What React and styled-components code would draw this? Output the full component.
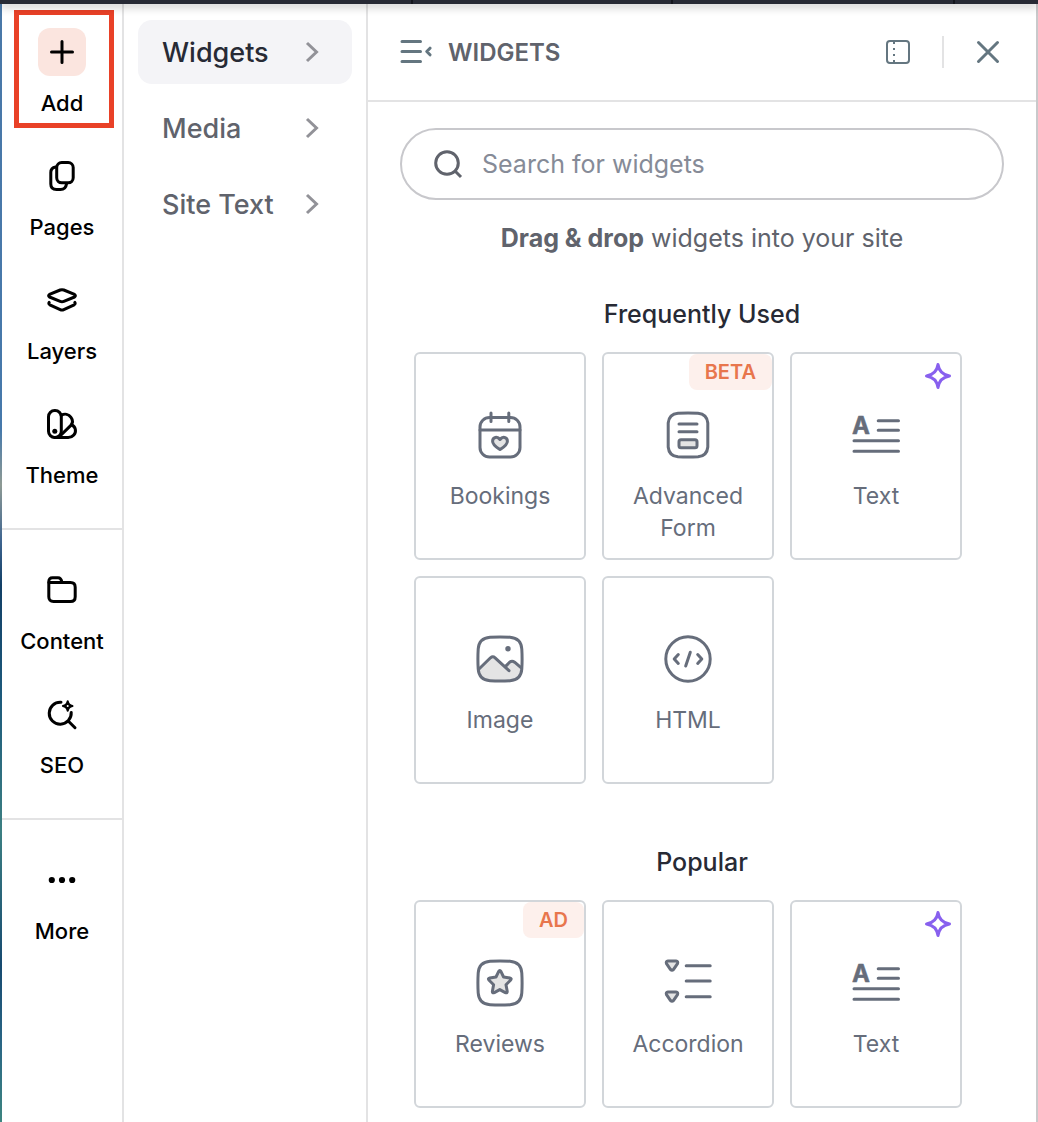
import React, { useState } from 'react';
import styled, { createGlobalStyle } from 'styled-components';

const GlobalStyle = createGlobalStyle`
  * {
    box-sizing: border-box;
  }

  body {
    margin: 0;
    background: #fff;
    font-family: Inter, "Liberation Sans", sans-serif;
  }

  button,
  input {
    font-family: inherit;
  }
`;

const Page = styled.div`
  display: flex;
  flex-direction: column;
  min-height: 100vh;
`;

const TopBar = styled.header`
  display: flex;
  height: 4px;
  padding-left: 411px;
  background: #272a35;
  box-shadow: 0 2px 10px rgba(0, 0, 0, 0.35);
  z-index: 1;
`;

const TopBarSlot = styled.div`
  width: ${({ $width }) => $width}px;
  border-left: 2px solid #14161d;
`;

const Body = styled.div`
  display: flex;
  flex: 1;
`;

const CanvasEdge = styled.div`
  width: 2px;
  background: linear-gradient(#4a78a8, #4679ab 38%, #8e9a94 43%, #3f6590 48%, #123f66 52%, #1d5a7c 62%, #3c7f82 74%, #174a70 86%, #2a6685 93%, #3d8580);
`;

const Rail = styled.nav`
  width: 122px;
  border-right: 2px solid #e3e3e4;
`;

const RailButton = styled.button`
  position: relative;
  display: flex;
  flex-direction: column;
  align-items: center;
  gap: 11px;
  width: 100%;
  padding: 24px 0 9px;
  border: 0;
  background: none;
  color: #000;
  font-size: 22px;
  font-weight: 500;
  line-height: 32px;
  cursor: pointer;
`;

const RailIcon = styled.span`
  display: flex;
  align-items: center;
  justify-content: center;
  width: 48px;
  height: 48px;
  border-radius: 12px;
  background: ${({ $active }) => ($active ? '#fbe5df' : 'none')};
`;

const Highlight = styled.span`
  position: absolute;
  inset: 6px 8px 0 12px;
  border: 5px solid #e94127;
`;

const RailDivider = styled.hr`
  height: 2px;
  margin: 28px 0 12px;
  border: 0;
  background: #e3e3e4;
`;

const SubNav = styled.nav`
  display: flex;
  flex-direction: column;
  gap: 12px;
  width: 244px;
  padding: 16px 14px;
  border-right: 2px solid #e3e3e4;
`;

const SubNavButton = styled.button`
  display: flex;
  align-items: center;
  justify-content: space-between;
  height: 64px;
  padding: 0 28px 0 24px;
  border: 0;
  border-radius: 14px;
  background: ${({ $active }) => ($active ? '#f4f4f7' : 'none')};
  color: ${({ $active }) => ($active ? '#272a35' : '#60636c')};
  font-size: 27px;
  font-weight: 500;
  cursor: pointer;
`;

const Panel = styled.main`
  flex: 1;
  border-right: 2px solid #c9c9cb;
`;

const PanelHeader = styled.div`
  display: flex;
  align-items: center;
  gap: 16px;
  height: 98px;
  padding: 0 32px;
  border-bottom: 2px solid #e3e3e4;
`;

const PanelTitle = styled.h1`
  flex: 1;
  margin: 0;
  color: #60636c;
  font-size: 24px;
  font-weight: 600;
`;

const IconButton = styled.button`
  display: flex;
  padding: 0;
  border: 0;
  background: none;
  cursor: pointer;
`;

const HeaderDivider = styled.span`
  width: 2px;
  height: 32px;
  margin: 0 12px 0 16px;
  background: #e3e3e4;
`;

const PanelContent = styled.div`
  padding: 26px 32px 0;
`;

const SearchBox = styled.label`
  display: flex;
  align-items: center;
  gap: 18px;
  height: 72px;
  padding: 0 30px;
  border: 2px solid #c8c8cc;
  border-radius: 36px;
`;

const SearchInput = styled.input`
  flex: 1;
  min-width: 0;
  padding: 0;
  border: 0;
  outline: 0;
  background: none;
  color: #272a35;
  font-size: 25px;

  &::placeholder {
    color: #868b97;
    opacity: 1;
  }
`;

const Tip = styled.p`
  margin: 22px 0 0;
  color: #60636c;
  font-size: 25px;
  line-height: 32px;
  text-align: center;
`;

const Section = styled.section`
  margin-bottom: 62px;
`;

const SectionTitle = styled.h2`
  margin: 0 0 22px;
  color: #272a35;
  font-size: 25px;
  font-weight: 500;
  line-height: 32px;
  text-align: center;
`;

const Sections = styled.div`
  padding-top: 44px;

  ${Section}:last-child {
    margin-bottom: 0;
  }
`;

const Grid = styled.div`
  display: grid;
  grid-template-columns: repeat(auto-fill, 172px);
  gap: 16px;
  padding-left: 14px;
`;

const Card = styled.button`
  position: relative;
  display: flex;
  flex-direction: column;
  align-items: center;
  gap: 21px;
  height: 208px;
  padding: 57px 16px 0;
  border: 2px solid #d2d6da;
  border-radius: 6px;
  background: #fff;
  color: #666d7b;
  font-size: 23px;
  line-height: 32px;
  cursor: grab;
`;

const Badge = styled.span`
  position: absolute;
  top: 0;
  right: 0;
  padding: 0 16px;
  border-radius: 8px;
  background: #fdf0ec;
  color: #e8764d;
  font-size: 20px;
  font-weight: 600;
  line-height: 36px;
`;

const Sparkle = styled.svg`
  position: absolute;
  top: 9px;
  right: 9px;
  fill: none;
  stroke: #8860ee;
  stroke-width: 3;
  stroke-linejoin: round;
`;

const RailSvg = styled.svg`
  fill: none;
  stroke: #000;
  stroke-width: 3;
  stroke-linecap: round;
  stroke-linejoin: round;
`;

const HeaderSvg = styled.svg`
  fill: none;
  stroke: #647680;
  stroke-width: 3;
  stroke-linecap: round;
  stroke-linejoin: round;
`;

const WidgetSvg = styled.svg`
  flex-shrink: 0;
  fill: none;
  stroke: #666d7b;
  stroke-width: 3;
  stroke-linecap: round;
  stroke-linejoin: round;
`;

const SHADE = '#e4e4e4';

const railIcons = {
  add: <path d="M16 5.5v21M5.5 16h21" />,
  pages: (
    <>
      <rect x="10.7" y="2.5" width="16.5" height="20.3" rx="5" />
      <path d="M9.6 7C6.5 7.5 4.8 9.4 4.8 12.5V24c0 3.5 2.2 5.5 5.7 5.5h4c3.5 0 5.5-2 6-5.5" />
    </>
  ),
  layers: (
    <>
      <path d="M14.2 6Q16 5.3 17.8 6l10.7 4.4q1.8 1.3 0 2.6l-10.7 4.4q-1.8.7-3.6 0L3.5 13q-1.8-1.3 0-2.6Z" />
      <path d="M3.2 18.4q-1 1.5.6 2.4l10.4 4.8q1.8.8 3.6 0l10.4-4.8q1.6-.9.6-2.4" />
    </>
  ),
  theme: (
    <>
      <rect x="2.5" y="2.5" width="12.8" height="27" rx="6.2" />
      <path d="M15.2 7.4c3.5-2 7.6-1.2 9.8 2 2.2 3 2 5.6-.4 8.2L13 29" />
      <path d="M25.6 17c4 1.5 5.2 6.500 2.200 10-1.600 1.800-3.200 2.500-5.600 2.500H8.800" />
      <circle cx="8.8" cy="23.2" r="2.5" fill="#000" stroke="none" />
    </>
  ),
  content: (
    <>
      <path d="M2.8 8V7.5c0-2.5 1.2-3.7 3.7-3.7H12c2.6 0 3.4 1.6 4 4.7h8.5c3.1 0 4.7 1.7 4.7 4.7v9.5c0 3.2-1.6 4.8-4.7 4.8h-17c-3.1 0-4.7-1.6-4.7-4.8Z" />
      <path d="M3 8.5h13" />
    </>
  ),
  seo: (
    <>
      <path d="M15 4.2a11 11 0 1 0 10.200 10.200M22.500 23.200l6.500 6.500" />
      <path fill="#000" strokeWidth="2" d="M21.7 3.2q.8 4 4.800 4.800-4 .8-4.800 4.800-.8-4-4.800-4.800 4-.8 4.800-4.800Z" />
      <circle cx="21.7" cy="8" r="1" fill="#fff" stroke="none" />
    </>
  ),
  more: (
    <>
      <circle cx="5.8" cy="16" r="3.1" fill="#000" stroke="none" />
      <circle cx="16" cy="16" r="3.1" fill="#000" stroke="none" />
      <circle cx="26.2" cy="16" r="3.1" fill="#000" stroke="none" />
    </>
  ),
};

const squircle = 'M14 2.200Q24 1.600 34 2.200Q45 3 45.800 14Q46.400 24 45.800 34Q45 45 34 45.800Q24 46.400 14 45.800Q3 45 2.200 34Q1.600 24 2.200 14Q3 3 14 2.200Z';

const textIcon = (
  <>
    <text x="0" y="23" fontSize="24" fontWeight="700" fill="#666d7b" strokeWidth="0.5">A</text>
    <path d="M26.2 9.7h20.3M26.2 19.3h20.3M2 29.7h44.5M2 40.3h44.5" />
  </>
);

const widgetIcons = {
  bookings: (
    <>
      <rect x="4" y="6.5" width="40" height="39.5" rx="9.5" />
      <path d="M4 19h40M15 2v8.5M32.8 2v8.5" />
      <path fill={SHADE} d="M24 38.5c-3-2-7.400-4.500-7.400-8.300 0-4.200 4.800-5.200 7.400-1.700 2.600-3.500 7.400-2.500 7.400 1.700 0 3.800-4.400 6.300-7.400 8.300Z" />
    </>
  ),
  form: (
    <>
      <path d="M14 2.200Q24 1.600 34 2.200Q43 3 43.800 12V36Q43 45 34 45.800Q24 46.400 14 45.800Q5 45 4.200 36V12Q5 3 14 2.200Z" />
      <path d="M15 13h18M15 20.7h18" />
      <rect x="15" y="28.8" width="18" height="8" rx="2" fill={SHADE} />
    </>
  ),
  text: textIcon,
  image: (
    <>
      <path fill={SHADE} stroke="none" d="M2.5 34.5 14.5 22.8q2.3-2 4.6 0L30.5 32l3.5-4.5q2.5-2 5 0l6.500 5C44.500 43 38 46 24 46S3.500 43 2.500 34.500Z" />
      <path d="M3 34 14.5 22.8q2.300-2 4.600 0L33 35.700M29.300 31.600 33.600 27.200q2.400-2 5 0L45 32.600" />
      <path d={squircle} />
      <circle cx="32" cy="13.7" r="2.7" fill="#666d7b" stroke="none" />
    </>
  ),
  html: (
    <>
      <circle cx="24" cy="24" r="22.2" />
      <path d="M14.3 19.5 10.2 24l4.1 4.5M33.7 19.5l4.1 4.5-4.1 4.5M26.300 17.200l-4.600 13.800" />
    </>
  ),
  reviews: (
    <>
      <path d={squircle} />
      <path fill={SHADE} d="M22.6 12.600q1.200-2 2.400 0l2.600 5.400 6.200.9q2.300.5.700 2.300L30 25.700l1.200 6.600q.2 2.200-1.900 1.300L23.800 30.600l-5.500 3q-2.100.9-1.900-1.300l1.200-6.600-4.500-4.500q-1.600-1.800.7-2.300l6.200-.9Z" />
    </>
  ),
  accordion: (
    <>
      <path d="M22.2 6.7h24M22.2 22h24M22.2 37.700h24" />
      <path fill={SHADE} d="M4 2h8q2.400.3 1.500 2.700L9.600 10.400Q8 12 6.400 10.400L2.500 4.700Q1.600 2.300 4 2Z" />
      <path fill={SHADE} d="M4 33h8q2.400.3 1.500 2.700l-3.900 5.700q-1.600 1.600-3.200 0l-3.900-5.700Q1.600 33.300 4 33Z" />
    </>
  ),
};

const railGroups = [
  [
    { id: 'add', label: 'Add' },
    { id: 'pages', label: 'Pages' },
    { id: 'layers', label: 'Layers' },
    { id: 'theme', label: 'Theme' },
  ],
  [
    { id: 'content', label: 'Content' },
    { id: 'seo', label: 'SEO' },
  ],
  [{ id: 'more', label: 'More' }],
];

const categories = ['Widgets', 'Media', 'Site Text'];

const sections = [
  {
    title: 'Frequently Used',
    widgets: [
      { icon: 'bookings', label: 'Bookings' },
      { icon: 'form', label: 'Advanced Form', badge: 'BETA' },
      { icon: 'text', label: 'Text', ai: true },
      { icon: 'image', label: 'Image' },
      { icon: 'html', label: 'HTML' },
    ],
  },
  {
    title: 'Popular',
    widgets: [
      { icon: 'reviews', label: 'Reviews', badge: 'AD' },
      { icon: 'accordion', label: 'Accordion' },
      { icon: 'text', label: 'Text', ai: true },
    ],
  },
];

const SideRail = () => (
  <Rail>
    {railGroups.map((group, i) => (
      <React.Fragment key={i}>
        {i > 0 && <RailDivider />}
        {group.map(({ id, label }) => (
          <RailButton key={id}>
            <RailIcon $active={id === 'add'}>
              <RailSvg width="32" height="32" viewBox="0 0 32 32">{railIcons[id]}</RailSvg>
            </RailIcon>
            {label}
            {id === 'add' && <Highlight />}
          </RailButton>
        ))}
      </React.Fragment>
    ))}
  </Rail>
);

const WidgetCard = ({ icon, label, badge, ai }) => (
  <Card>
    <WidgetSvg width="48" height="48" viewBox="0 0 48 48">{widgetIcons[icon]}</WidgetSvg>
    <span>{label}</span>
    {badge && <Badge>{badge}</Badge>}
    {ai && (
      <Sparkle width="26" height="26" viewBox="0 0 26 26">
        <path d="M13 1.5C14 8 18 12 24.5 13 18 14 14 18 13 24.5 12 18 8 14 1.5 13 8 12 12 8 13 1.5Z" />
      </Sparkle>
    )}
  </Card>
);

const App = () => {
  const [category, setCategory] = useState('Widgets');
  const [query, setQuery] = useState('');

  return (
    <Page>
      <GlobalStyle />
      <TopBar>
        <TopBarSlot $width={260} />
        <TopBarSlot $width={282} />
        <TopBarSlot $width={80} />
      </TopBar>
      <Body>
        <CanvasEdge />
        <SideRail />
        <SubNav>
          {categories.map((name) => (
            <SubNavButton key={name} $active={name === category} onClick={() => setCategory(name)}>
              {name}
              <svg width="24" height="24" viewBox="0 0 24 24" fill="none" stroke="#929298" strokeWidth="3">
                <path d="M7 3l9.5 9L7 21" />
              </svg>
            </SubNavButton>
          ))}
        </SubNav>
        <Panel>
          <PanelHeader>
            <IconButton aria-label="Collapse menu">
              <HeaderSvg width="32" height="32" viewBox="0 0 32 32">
                <path d="M2 5.5h18.5M2 15.5h18.5M2 25.5h18.5M30 12.2l-3.2 3.3 3.2 3.3" />
              </HeaderSvg>
            </IconButton>
            <PanelTitle>WIDGETS</PanelTitle>
            <IconButton aria-label="Dock panel">
              <HeaderSvg width="24" height="24" viewBox="0 0 24 24">
                <rect x="1" y="1" width="22" height="22" rx="3" strokeWidth="2" />
                <path d="M8 2v2M8 8v2M8 14v2M8 20v2" strokeWidth="2" strokeLinecap="butt" />
              </HeaderSvg>
            </IconButton>
            <HeaderDivider />
            <IconButton aria-label="Close">
              <HeaderSvg width="32" height="32" viewBox="0 0 32 32">
                <path d="M6.5 6.5l19 19M25.5 6.5l-19 19" />
              </HeaderSvg>
            </IconButton>
          </PanelHeader>
          <PanelContent>
            <SearchBox>
              <svg width="32" height="32" viewBox="0 0 32 32" fill="none" stroke="#60636c" strokeWidth="3">
                <circle cx="15" cy="15" r="11.3" />
                <path d="M23 23l6 6" />
              </svg>
              <SearchInput
                aria-label="Search for widgets"
                placeholder="Search for widgets"
                value={query}
                onChange={(e) => setQuery(e.target.value)}
              />
            </SearchBox>
            <Tip><b>Drag &amp; drop</b> widgets into your site</Tip>
            <Sections>
              {sections.map(({ title, widgets }) => (
                <Section key={title}>
                  <SectionTitle>{title}</SectionTitle>
                  <Grid>
                    {widgets.map((widget) => (
                      <WidgetCard key={widget.label} {...widget} />
                    ))}
                  </Grid>
                </Section>
              ))}
            </Sections>
          </PanelContent>
        </Panel>
      </Body>
    </Page>
  );
};

export default App;
